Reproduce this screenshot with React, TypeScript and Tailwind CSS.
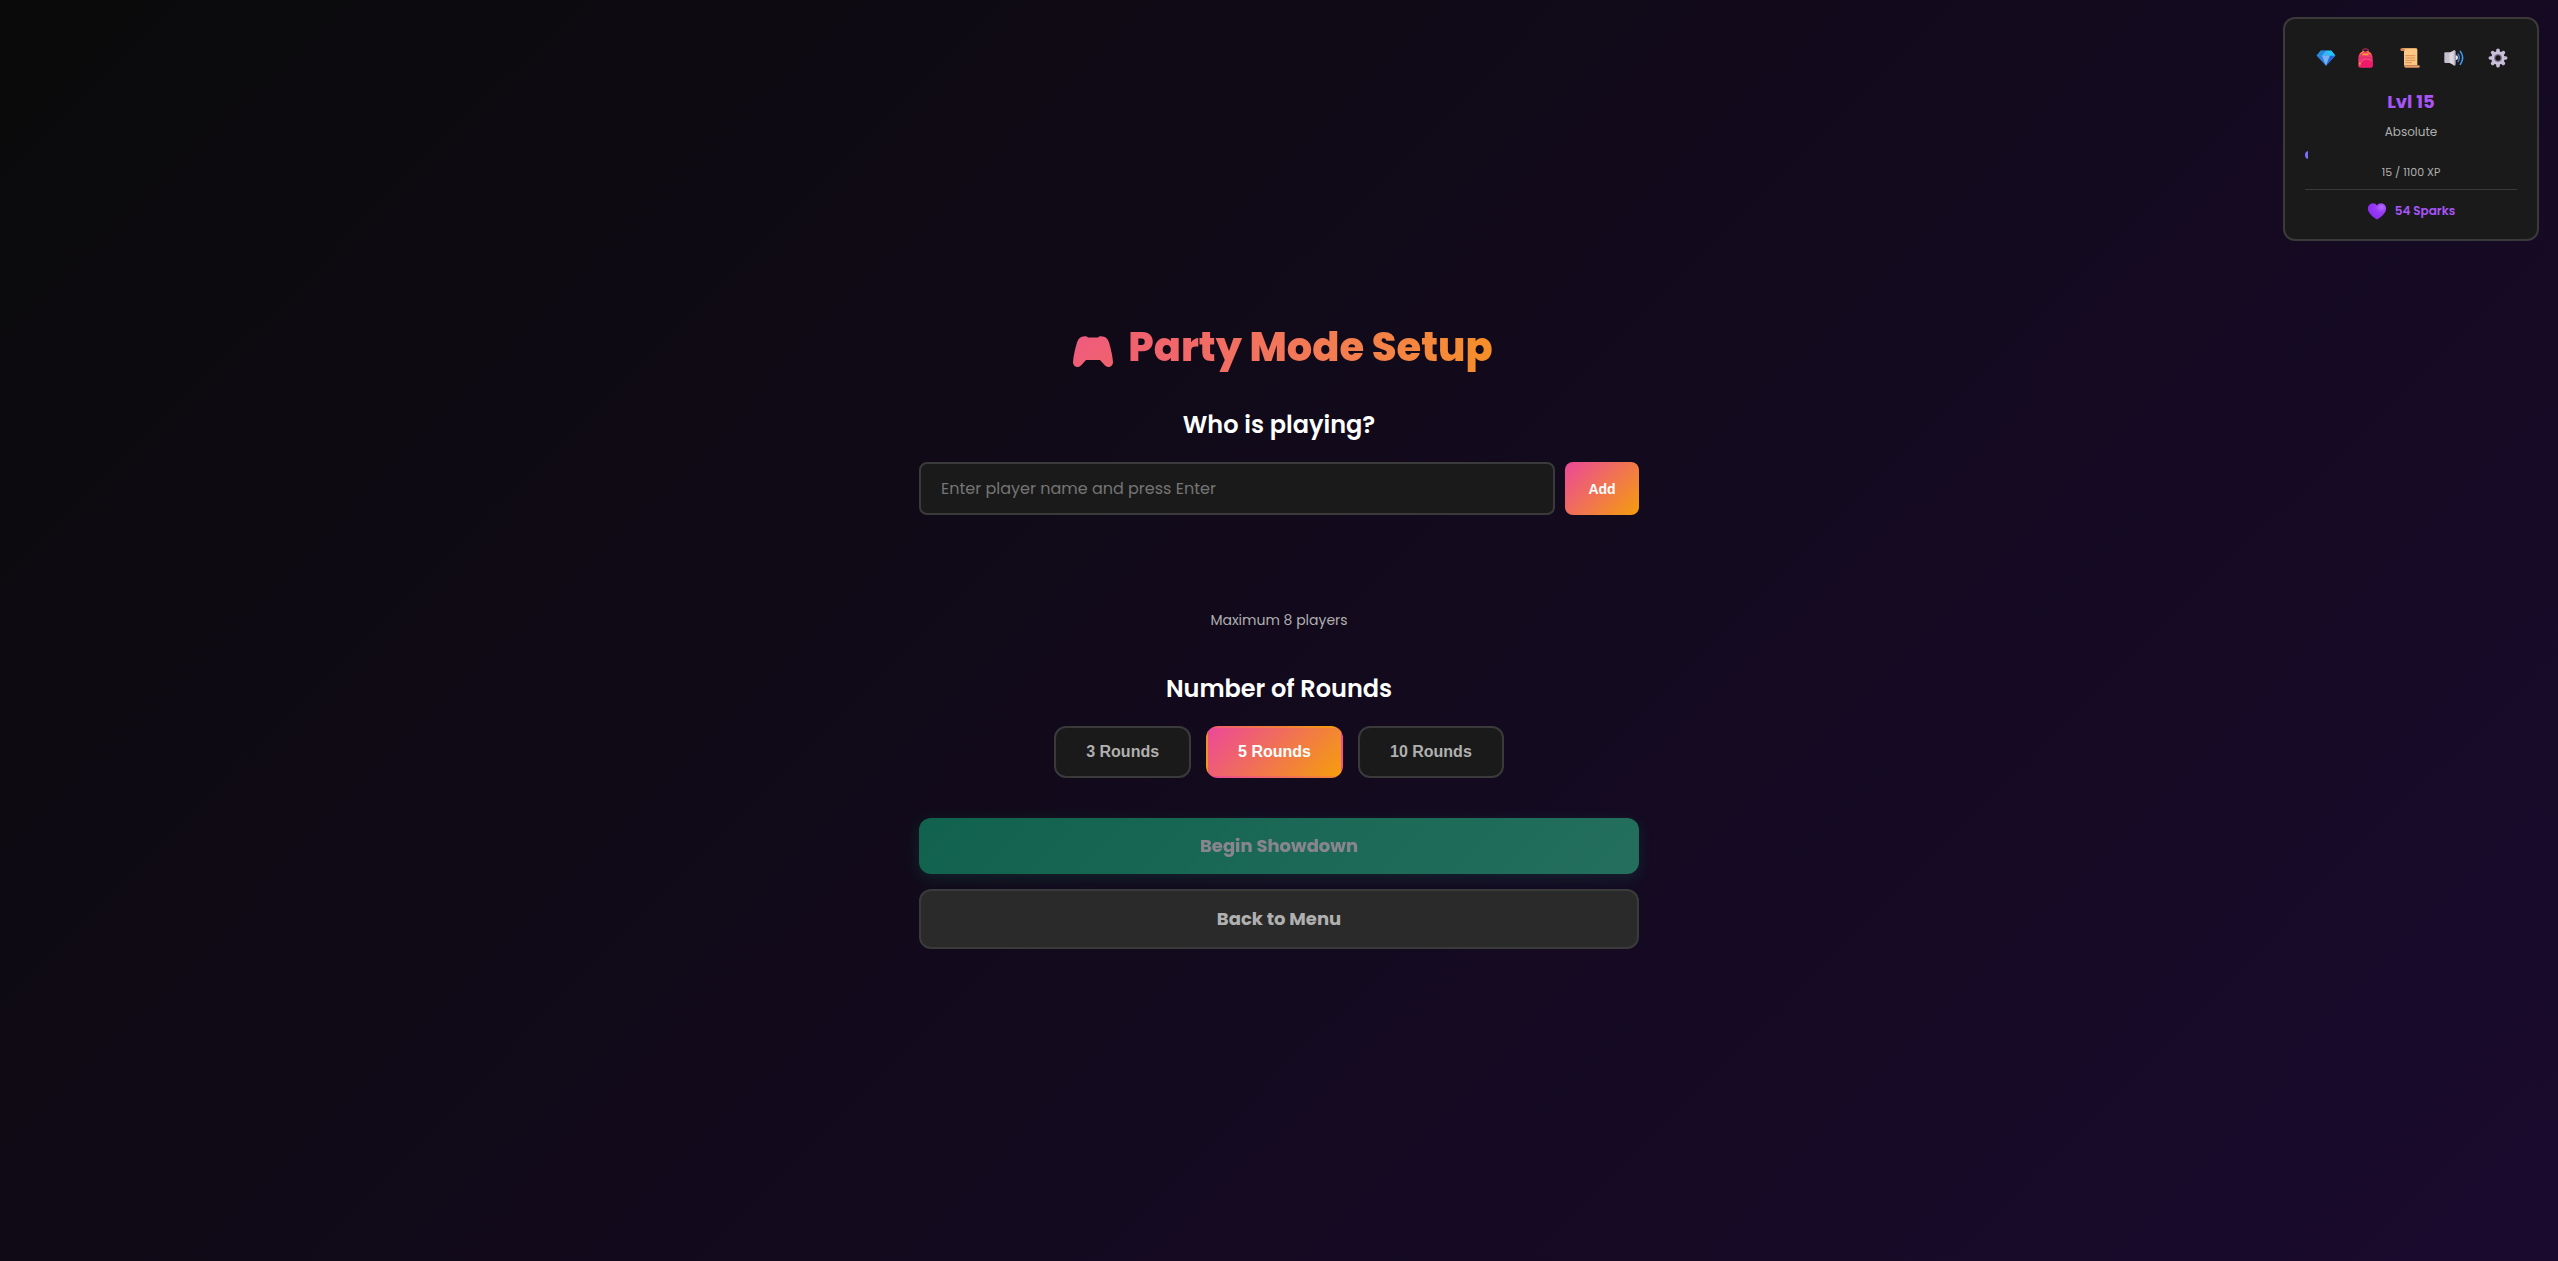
import React, { useState } from "react";

const icon = "h-5 w-5";

function Gem() {
  return (
    <svg viewBox="0 0 60 60" className={icon} aria-hidden="true">
      <path d="M14 8h32l12 15-28 30L2 23z" fill="#2f7fe0" />
      <path d="M14 8h32l12 15H2z" fill="#26b4f5" />
      <path d="M14 8h16l-12 15H2z" fill="#2585d8" />
      <path d="M46 8l12 15H42L30 8z" fill="#22c8fb" />
      <path d="M30 8l12 15H18z" fill="#3fb0f4" />
      <path d="M18 23h24L30 53z" fill="#78b2f4" />
      <path d="M42 23h16L30 53z" fill="#2468d4" />
    </svg>
  );
}

function Backpack() {
  return (
    <svg viewBox="0 0 46 60" className="mr-auto h-5 w-[15px]" aria-hidden="true">
      <path d="M14 12V8q0-6 9-6t9 6v4" fill="none" stroke="#a32a4e" strokeWidth="4" />
      <path d="M1 32C1 16 9 9 23 9s22 7 22 23v22a5 5 0 0 1-5 5H6a5 5 0 0 1-5-5z" fill="#ee3a70" />
      <path d="M7 18l11-9M39 18L28 9" stroke="#f58a30" strokeWidth="4" />
      <path d="M14 19h18" stroke="#f7a92c" strokeWidth="5" />
      <path d="M8 59V48c0-10 7-17 18-17 9 0 16 4 19 11v12a5 5 0 0 1-5 5z" fill="#f01a6a" />
      <path d="M3 31q20-9 40 0" fill="none" stroke="#d4245f" strokeWidth="2" />
      <path d="M10 44q4-11 16-11 10 0 18 7" fill="none" stroke="#f65a90" strokeWidth="3" />
      <rect x="3" y="44" width="6" height="6" fill="#f79a2c" />
    </svg>
  );
}

function Scroll() {
  return (
    <svg viewBox="0 0 60 60" className={icon} aria-hidden="true">
      <path d="M6 1h42a4 4 0 0 1 4 4v47H12V9H6z" fill="#fcc783" />
      <path d="M5 1h9v8H5a4 4 0 0 1 0-8z" fill="#d98550" />
      <path d="M10 1h38" stroke="#e9a565" strokeWidth="3" />
      <path d="M16 52h40a3.500 3.500 0 0 1 0 7H17a6 6 0 0 1-5-7z" fill="#e59a68" />
      <path d="M16 23h30M16 30h30M16 37h30M16 44h20" stroke="#d98f5a" strokeWidth="3" />
    </svg>
  );
}

function Speaker() {
  return (
    <svg viewBox="0 0 60 60" className={icon} aria-hidden="true">
      <path d="M4 13h14v32H4a3 3 0 0 1-3-3V16a3 3 0 0 1 3-3z" fill="#c6bfce" />
      <path d="M16 14L32 6v47L16 44z" fill="#dcd6e0" />
      <path d="M29 7q6-2 6 4v37q0 6-6 4z" fill="#b9b0c4" />
      <path d="M35 22a7 7 0 0 1 0 14z" fill="#eee8f2" />
      <path d="M42 18q8 11 0 23" fill="none" stroke="#3a86d8" strokeWidth="4" strokeLinecap="round" />
      <path d="M49 10q14 19 0 39" fill="none" stroke="#45a0f5" strokeWidth="4.500" strokeLinecap="round" />
    </svg>
  );
}

function Gear() {
  return (
    <svg viewBox="0 0 60 60" className={icon} aria-hidden="true">
      <g stroke="#c6bbd6" strokeWidth="11" strokeLinecap="round">
        <path d="M30 7v46M7 30h46M14 14l32 32M46 14L14 46" />
      </g>
      <circle cx="30" cy="30" r="20" fill="#cbc1da" />
      <circle cx="30" cy="30" r="12" fill="#857b96" />
      <circle cx="30" cy="30" r="8" fill="#1a1a1a" />
    </svg>
  );
}

function Heart() {
  return (
    <svg viewBox="0 0 60 60" className={icon} aria-hidden="true">
      <defs>
        <radialGradient id="heart" cx="0.75" cy="0.25" r="0.8">
          <stop offset="0" stopColor="#b46cff" />
          <stop offset="0.4" stopColor="#9a3df5" />
          <stop offset="1" stopColor="#8a2af2" />
        </radialGradient>
      </defs>
      <path
        d="M30 14C26 7 17 5 10 9 2 14 1 24 5 32c5 10 15 16 21 21q4 3 8 0c6-5 16-11 21-21 4-8 3-18-5-23-7-4-16-2-20 5z"
        fill="url(#heart)"
      />
    </svg>
  );
}

function Gamepad() {
  return (
    <svg viewBox="0 0 40 31" className="mt-2 h-[31px] w-10" aria-hidden="true">
      <defs>
        <linearGradient id="pad" x1="0" y1="0" x2="1" y2="1">
          <stop offset="0" stopColor="#ef5b80" />
          <stop offset="1" stopColor="#f0626d" />
        </linearGradient>
      </defs>
      <path
        d="M9 .8c2-1 5-1 6 .8h10c1-1.800 4-1.800 6-.8 2.500.7 4 2.700 5 5.700C38 13 39.500 20 40 26c0 5-5 6.500-8 3.500l-5-5.500H13l-5 5.500C5 32.500 0 31 0 26 .5 20 2 13 4 6.500c1-3 2.500-5 5-5.700z"
        fill="url(#pad)"
      />
    </svg>
  );
}

const tools = [
  { label: "Shop", Icon: Gem, width: "w-6" },
  { label: "Inventory", Icon: Backpack, width: "w-5" },
  { label: "Quests", Icon: Scroll, width: "w-6" },
  { label: "Sound", Icon: Speaker, width: "w-6" },
  { label: "Settings", Icon: Gear, width: "w-6" },
];

function StatusPanel() {
  return (
    <aside className="absolute top-[17px] right-[19px] w-64 rounded-xl border-2 border-[#3a3a3a] bg-[#1a1a1a] px-5 pt-[27px] pb-[18px] text-center">
      <div className="flex gap-5 pl-[9px]">
        {tools.map(({ label, Icon, width }) => (
          <button key={label} aria-label={label} type="button" className={`flex h-6 items-center justify-center ${width}`}>
            <Icon />
          </button>
        ))}
      </div>
      <p className="mt-[18px] text-lg leading-7 font-bold text-[#a855f7]">Lvl 15</p>
      <p className="mt-1 text-xs leading-6 text-[#b0b0b0]">Absolute</p>
      <div className="mt-[7px] h-2 overflow-hidden rounded-full">
        <div className="h-full bg-[#7c6cff]" style={{ width: `${(15 / 1100) * 100}%` }} />
      </div>
      <p className="mt-[3px] text-[11px] leading-5 text-[#b0b0b0]">15 / 1100 XP</p>
      <div className="mt-[7px] flex items-center justify-center gap-2 border-t border-[#3a3a3a] pt-[11px] text-xs font-semibold text-[#a855f7]">
        <Heart />
        <span>54 Sparks</span>
      </div>
    </aside>
  );
}

export default function App() {
  const [name, setName] = useState("");
  const [rounds, setRounds] = useState(5);
  return (
    <div className="relative flex min-h-screen flex-col items-center bg-[linear-gradient(135deg,#0a0a0a_0%,#1a0a2e_100%)] px-5 pt-[317px] font-['Poppins','Inter',sans-serif]">
      <StatusPanel />
      <main className="flex w-full max-w-[720px] flex-col text-center">
        <h1 className="flex items-center justify-center gap-[15px] pl-2 text-[40px] leading-[60px] font-extrabold">
          <Gamepad />
          <span className="bg-linear-to-r from-[#f0606f] to-[#f58f26] bg-clip-text text-transparent">Party Mode Setup</span>
        </h1>
        <h2 className="mt-7 text-2xl leading-10 font-semibold text-white">Who is playing?</h2>
        <form className="mt-[17px] flex gap-2.5" onSubmit={(e) => e.preventDefault()}>
          <input
            aria-label="Player name"
            placeholder="Enter player name and press Enter"
            value={name}
            onChange={(e) => setName(e.target.value)}
            className="h-[53px] min-w-0 flex-1 rounded-lg border-2 border-[#3a3a3a] bg-[#1a1a1a] px-5 text-base text-white outline-none placeholder:text-[#757575]"
          />
          <button type="submit" className="w-[74px] rounded-lg bg-[linear-gradient(135deg,#ec4899,#f59e0b)] font-['Liberation_Sans',sans-serif] text-sm font-bold text-white">
            Add
          </button>
        </form>
        <p className="mt-[95px] text-sm leading-5 text-[#b0b0b0]">Maximum 8 players</p>
        <h2 className="mt-[39px] text-2xl leading-10 font-semibold text-white">Number of Rounds</h2>
        <div className="mt-[17px] flex justify-center gap-[15px] font-['Liberation_Sans',sans-serif] font-bold">
          {[3, 5, 10].map((n) => (
            <button
              key={n}
              type="button"
              aria-pressed={rounds === n}
              onClick={() => setRounds(n)}
              className={
                rounds === n
                  ? "h-[52px] rounded-xl border-2 border-transparent bg-[linear-gradient(135deg,#ec4899,#f59e0b)] px-[30px] text-white"
                  : "h-[52px] rounded-xl border-2 border-[#3a3a3a] bg-[#1a1a1a] px-[30px] text-[#b0b0b0]"
              }
            >
              {n} Rounds
            </button>
          ))}
        </div>
        <button type="button" disabled className="mt-10 h-14 rounded-xl bg-[linear-gradient(135deg,#10b981,#34d399)] text-lg font-bold text-white opacity-50 shadow-[0_4px_15px_rgba(16,185,129,0.3)]">
          Begin Showdown
        </button>
        <button type="button" className="mt-[15px] h-[60px] rounded-xl border-2 border-[#3a3a3a] bg-[#2a2a2a] text-lg font-bold text-[#b0b0b0]">
          Back to Menu
        </button>
      </main>
    </div>
  );
}
